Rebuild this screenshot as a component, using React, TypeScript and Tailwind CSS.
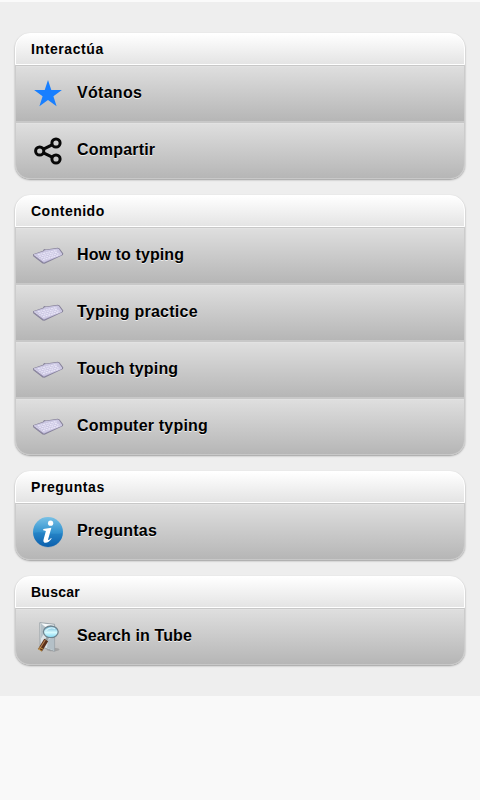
import type { ReactNode } from 'react';

function Star() {
  return (
    <svg width="32" height="32" viewBox="0 0 32 32">
      <path fill="#187fff" d="M16 2l3.3 10h10.6l-8.5 6.2 3.2 10-8.6-6.1-8.6 6.1 3.2-10L2.1 12h10.6z" />
    </svg>
  );
}

function Share() {
  return (
    <svg width="32" height="32" viewBox="0 0 32 32" fill="none" stroke="#080808" strokeWidth="3">
      <path d="M11.5 14.2l8.5-4.4M11.5 17.8l8.7 4.4" />
      <circle cx="7.7" cy="16" r="4.1" />
      <circle cx="24" cy="8" r="4.1" />
      <circle cx="24" cy="24" r="4.1" />
    </svg>
  );
}

function Keyboard() {
  return (
    <svg width="32" height="32" viewBox="0 0 32 32">
      <path fill="#858098" d="M1 14.2l10-3.4 1-1.7 2 .4 11.7-1.8 1.9.7 3.7 5.2-.4 1.5L12.5 23.8l-1.9-.2L1.2 16.2z" />
      <path fill="#cbc7e2" d="M1.6 14.6l10-3.3 1-1 12.8-1.7 1.4.5 3.6 5-18.9 7.5z" />
      <path fill="#b9b3d6" d="M1.8 15.7l9.7 5.9 18.7-7.5-.3.9-18 7.7z" />
      <path fill="none" stroke="#e9e6f8" strokeWidth="1.1" strokeDasharray="2 .7" d="M5.8 14.8l18.8-4.4M7.2 16.4l18.3-4.4M9 18l17.5-4.4M11 19.6l16.2-4.5" />
      <path fill="none" stroke="#eeeafc" strokeWidth=".6" d="M2 14.8l9.8 6.6 18-7.1" />
    </svg>
  );
}

function Info() {
  return (
    <svg width="32" height="32" viewBox="0 0 32 32">
      <defs>
        <linearGradient id="ball" x2="0" y2="1">
          <stop stopColor="#79c1e5" />
          <stop offset=".5" stopColor="#3393d0" />
          <stop offset="1" stopColor="#0c5fac" />
        </linearGradient>
      </defs>
      <circle cx="16" cy="16" r="15" fill="url(#ball)" />
      <path d="M1.5 17C10 14 20 20 30.5 17A14.5 14.5 0 0 1 1.5 17" fill="#0961af" opacity=".25" />
      <circle cx="18.6" cy="7.2" r="2.6" fill="white" />
      <path fill="white" d="M11.3 13.1l8.1-1.4-3.2 11.2c-.5 1.8.8 1.4 2.8-.9l.7.6c-3.3 5.4-9.3 5.5-8.2 1.1l2.4-8.7-2.8-.8z" />
    </svg>
  );
}

function Search() {
  return (
    <svg width="32" height="32" viewBox="0 0 32 32">
      <defs>
        <linearGradient id="lens" x2="0" y2="1">
          <stop stopColor="#5aabd0" />
          <stop offset=".55" stopColor="#d8fbff" />
          <stop offset="1" stopColor="#80d8f3" />
        </linearGradient>
      </defs>
      <ellipse cx="21" cy="28.5" rx="6.5" ry="1.7" fill="#777" opacity=".4" />
      <path fill="#dce2e5" stroke="#8f999f" strokeWidth=".8" d="M7.8 1.6l14.8 1.7v27L8.1 25.5z" />
      <path fill="#b4c0c7" d="M9 2.5l6 5-6 10zm7 16l6-2v13l-7-2.5z" />
      <path fill="#f7fafb" d="M9.5 2.4l12.5 1.5v2L14 6z" />
      <path d="M15.8 16.5L13 21" stroke="#9aa0a2" strokeWidth="2.6" />
      <path d="M14.2 19L8 29.3" stroke="#59301b" strokeWidth="4.6" />
      <path d="M13.2 19L7 28.7" stroke="#b98557" strokeWidth="1.1" />
      <path d="M5.9 27.7l4 2.4M7.2 26l3.8 2.2" stroke="#d0a248" strokeWidth=".9" />
      <ellipse cx="18.8" cy="10.8" rx="7.4" ry="5.8" fill="url(#lens)" stroke="#70848f" strokeWidth="1.3" />
      <path d="M13.5 10q4-4.7 9.5-2.4" stroke="#d5f2fa" strokeWidth="1.3" fill="none" />
    </svg>
  );
}

type Item = { label: string; icon: ReactNode; tracking: string };

const sections: { title: string; tracking: string; items: Item[] }[] = [
  {
    title: 'Interactúa',
    tracking: 'tracking-[0.6px]',
    items: [
      { label: 'Vótanos', icon: <Star />, tracking: 'tracking-[0.3px]' },
      { label: 'Compartir', icon: <Share />, tracking: 'tracking-[0.2px]' },
    ],
  },
  {
    title: 'Contenido',
    tracking: 'tracking-[0.5px]',
    items: [
      { label: 'How to typing', icon: <Keyboard />, tracking: 'tracking-[0.1px]' },
      { label: 'Typing practice', icon: <Keyboard />, tracking: 'tracking-[0.25px]' },
      { label: 'Touch typing', icon: <Keyboard />, tracking: 'tracking-[0.17px]' },
      { label: 'Computer typing', icon: <Keyboard />, tracking: 'tracking-[0.2px]' },
    ],
  },
  {
    title: 'Preguntas',
    tracking: 'tracking-[0.6px]',
    items: [{ label: 'Preguntas', icon: <Info />, tracking: 'tracking-[0.2px]' }],
  },
  {
    title: 'Buscar',
    tracking: 'tracking-[0.25px]',
    items: [{ label: 'Search in Tube', icon: <Search />, tracking: 'tracking-[0.1px]' }],
  },
];

export default function App() {
  return (
    <div className="min-h-[800px] bg-[#f9f9f9] font-['Liberation_Sans',Arial,sans-serif] font-bold text-black">
      <main className="flex h-[696px] flex-col gap-4 border-t-2 border-[#fafafa] bg-[#eee] px-[15px] pt-[31px]">
        {sections.map((section) => (
          <section key={section.title} className="rounded-[15px] shadow-[0_1px_2px_rgba(0,0,0,0.35)]">
            <h2 className={`flex h-8 items-center rounded-t-[15px] border border-white bg-linear-to-b from-white to-[#e4e4e4] pl-[15px] text-[14px] leading-[18px] ${section.tracking}`}>
              {section.title}
            </h2>
            <ul className="overflow-hidden rounded-b-[15px] border-x border-[#ccc] bg-[#ccc]">
              {section.items.map((item) => (
                <li
                  key={item.label}
                  className="flex h-[57px] items-center gap-[13px] border-y border-[#c8c8c8] bg-linear-to-b from-[#dfdfdf] to-[#b6b6b6] pl-4 text-[16px] shadow-[inset_0_1px_0_#e2e2e2] [text-shadow:0_1px_0_#eee] last:rounded-b-[14px]"
                >
                  <span className="mt-px">{item.icon}</span>
                  <span className={`pb-[2px] leading-[20px] ${item.tracking}`}>{item.label}</span>
                </li>
              ))}
            </ul>
          </section>
        ))}
      </main>
    </div>
  );
}
